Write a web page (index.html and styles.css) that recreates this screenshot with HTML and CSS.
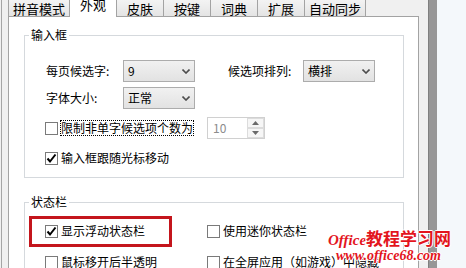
FILE: index.html
```html
<!DOCTYPE html>
<html lang="zh-CN">
<head>
<meta charset="utf-8">
<title>外观设置</title>
<link rel="stylesheet" href="styles.css">
</head>
<body>
<div class="window">
  <div class="edge-left"></div>
  <div class="tabctl">
    <div class="tabs">
      <div class="tab">拼音模式</div>
      <div class="tab tab-active">外观</div>
      <div class="tab">皮肤</div>
      <div class="tab">按键</div>
      <div class="tab">词典</div>
      <div class="tab">扩展</div>
      <div class="tab">自动同步</div>
    </div>
    <div class="panel">
      <fieldset class="group g1">
        <legend>输入框</legend>
        <div class="rows">
          <div class="row">
            <span class="lbl">每页候选字:</span>
            <span class="combo">9<svg class="arrow" width="8" height="5" viewBox="0 0 8 5"><path d="M0.5 0.5 L4 4 L7.5 0.5" fill="none" stroke="#4d4d4d" stroke-width="1.6"/></svg></span>
            <span class="lbl lbl2">候选项排列:</span>
            <span class="combo">横排<svg class="arrow" width="8" height="5" viewBox="0 0 8 5"><path d="M0.5 0.5 L4 4 L7.5 0.5" fill="none" stroke="#4d4d4d" stroke-width="1.6"/></svg></span>
          </div>
          <div class="row row-near">
            <span class="lbl">字体大小:</span>
            <span class="combo">正常<svg class="arrow" width="8" height="5" viewBox="0 0 8 5"><path d="M0.5 0.5 L4 4 L7.5 0.5" fill="none" stroke="#4d4d4d" stroke-width="1.6"/></svg></span>
          </div>
          <div class="row row-far">
            <span class="chk"></span>
            <span class="focus">限制非单字候选项个数为</span>
            <span class="spin">
              <span class="spin-val">10</span>
              <span class="spin-btns">
                <span class="spin-btn"><svg width="7" height="4" viewBox="0 0 7 4"><path d="M0 4 L3.5 0 L7 4 Z" fill="#6a6a6a"/></svg></span>
                <span class="spin-btn"><svg width="7" height="4" viewBox="0 0 7 4"><path d="M0 0 L3.5 4 L7 0 Z" fill="#6a6a6a"/></svg></span>
              </span>
            </span>
          </div>
          <div class="row row-far">
            <span class="chk"><svg width="11" height="11" viewBox="0 0 11 11"><path d="M1.5 5.5 L4 8.5 L9.5 1.5" fill="none" stroke="#000" stroke-width="2"/></svg></span>
            <span>输入框跟随光标移动</span>
          </div>
        </div>
      </fieldset>
      <fieldset class="group g2">
        <legend>状态栏</legend>
        <div class="rows">
          <div class="row">
            <span class="cell"><span class="chk"><svg width="11" height="11" viewBox="0 0 11 11"><path d="M1.5 5.5 L4 8.5 L9.5 1.5" fill="none" stroke="#000" stroke-width="2"/></svg></span>显示浮动状态栏</span>
            <span class="cell"><span class="chk"></span>使用迷你状态栏</span>
          </div>
          <div class="row row-mid">
            <span class="cell"><span class="chk"></span>鼠标移开后半透明</span>
            <span class="cell cell-wide"><span class="chk"></span>在全屏应用（如游戏）中隐藏</span>
          </div>
        </div>
      </fieldset>
    </div>
  </div>
  <div class="gap"></div>
  <div class="bar"></div>
  <div class="outside"></div>
</div>
<div class="highlight"></div>
<div class="watermark">
  <div class="wm1"><span class="wm-latin">Office</span><span class="wm-cjk">教程学习网</span></div>
  <div class="wm2">www.office68.com</div>
</div>
</body>
</html>
```

FILE: styles.css
```css
html, body {
  margin: 0;
}

body {
  width: 466px;
  height: 268px;
  overflow: hidden;
  position: relative;
  background: #f0f0f0;
  color: #000;
  font-family: "Noto Sans CJK SC", "Noto Sans", sans-serif;
  font-size: 12px;
  line-height: 14px;
}

.window {
  display: flex;
  height: 268px;
  overflow: hidden;
}

.edge-left {
  flex: none;
  width: 6px;
  margin-left: 1px;
  border-left: 1px solid #a5a5a5;
}

.tabctl {
  flex: none;
  width: 411px;
  display: flex;
  flex-direction: column;
}

.tabs {
  height: 16px;
  display: flex;
  align-items: flex-end;
}

.tab {
  box-sizing: border-box;
  height: 18px;
  min-width: 48px;
  padding: 2px 4px 0;
  margin-left: -1px;
  border: 1px solid #a3a3a3;
  border-bottom: 0;
  background: linear-gradient(#f4f4f4, #e4e4e4);
  text-align: center;
  font-size: 13px;
  line-height: 15px;
  white-space: nowrap;
}

.tab:first-child {
  margin-left: 0;
}

.tab-active {
  position: relative;
  z-index: 1;
  height: 21px;
  padding-top: 0;
  margin-bottom: -1px;
  background: #fff;
  line-height: 16px;
}

.panel {
  flex: none;
  background: #fff;
  border: 1px solid #a3a3a3;
  padding-bottom: 30px;
}

.group {
  margin: 11px 14px 0 15px;
  padding: 18px 0 8px 0;
  border: 1px solid #d5d9dd;
  min-width: 0;
}

.group legend {
  margin-left: 4px;
  padding: 0 2px;
  line-height: 14px;
}

.g2 {
  margin-top: 17px;
  padding-top: 11px;
}

.rows {
  padding-left: 21px;
}

.row {
  display: flex;
  align-items: center;
  height: 22px;
  white-space: nowrap;
}

.row-near {
  margin-top: 5px;
}

.row-far {
  margin-top: 8px;
}

.row-mid {
  margin-top: 9px;
}

.lbl {
  width: 77px;
  flex: none;
}

.lbl2 {
  width: 75px;
  margin-left: 33px;
}

.combo {
  box-sizing: border-box;
  flex: none;
  width: 72px;
  height: 22px;
  padding-left: 4px;
  border: 1px solid #acacac;
  background: linear-gradient(#f1f1f1, #e2e2e2);
  display: flex;
  align-items: center;
}

.arrow {
  margin-left: auto;
  margin-right: 4px;
}

.chk {
  box-sizing: border-box;
  flex: none;
  width: 13px;
  height: 13px;
  margin-left: -1px;
  margin-right: 3px;
  border: 1px solid #7a7a7a;
  background: #fff;
  display: flex;
  align-items: center;
  justify-content: center;
}

.focus {
  outline: 1px dotted #000;
}

.spin {
  box-sizing: border-box;
  flex: none;
  width: 58px;
  height: 22px;
  margin-left: 14px;
  border: 1px solid #d0d0d0;
  display: flex;
}

.spin-val {
  flex: 1;
  padding-left: 5px;
  color: #8c8c8c;
  line-height: 20px;
}

.spin-btns {
  width: 17px;
  display: flex;
  flex-direction: column;
}

.spin-btn {
  flex: 1;
  box-sizing: border-box;
  border: 1px solid #dcdcdc;
  background: #f6f6f6;
  display: flex;
  align-items: center;
  justify-content: center;
}

.cell {
  width: 162px;
  flex: none;
  display: flex;
  align-items: center;
}

.cell-wide {
  width: auto;
}

.gap {
  flex: none;
  width: 9px;
  background: #f0f0f0;
}

.bar {
  flex: none;
  width: 8px;
  border-left: 1px solid #7f7f7f;
  background: #979797;
}

.outside {
  flex: 1;
  background: #f4f8fb;
}

.highlight {
  position: absolute;
  left: 29px;
  top: 216px;
  width: 143px;
  height: 31px;
  box-sizing: border-box;
  border: 3px solid #c4151c;
}

.watermark {
  position: absolute;
  left: 328px;
  top: 229px;
  color: #e3151d;
  white-space: nowrap;
  text-shadow: 1px 0 #fff, -1px 0 #fff, 0 1px #fff, 0 -1px #fff;
}

.wm1 {
  line-height: 18px;
}

.wm-latin {
  font-family: "Liberation Serif", serif;
  font-style: italic;
  font-weight: bold;
  font-size: 15px;
}

.wm-cjk {
  font-family: "Noto Sans CJK SC", sans-serif;
  font-weight: bold;
  font-size: 17px;
}

.wm2 {
  margin-left: 8px;
  font-family: "Liberation Serif", serif;
  font-style: italic;
  font-weight: bold;
  font-size: 14px;
  line-height: 14px;
}
```
